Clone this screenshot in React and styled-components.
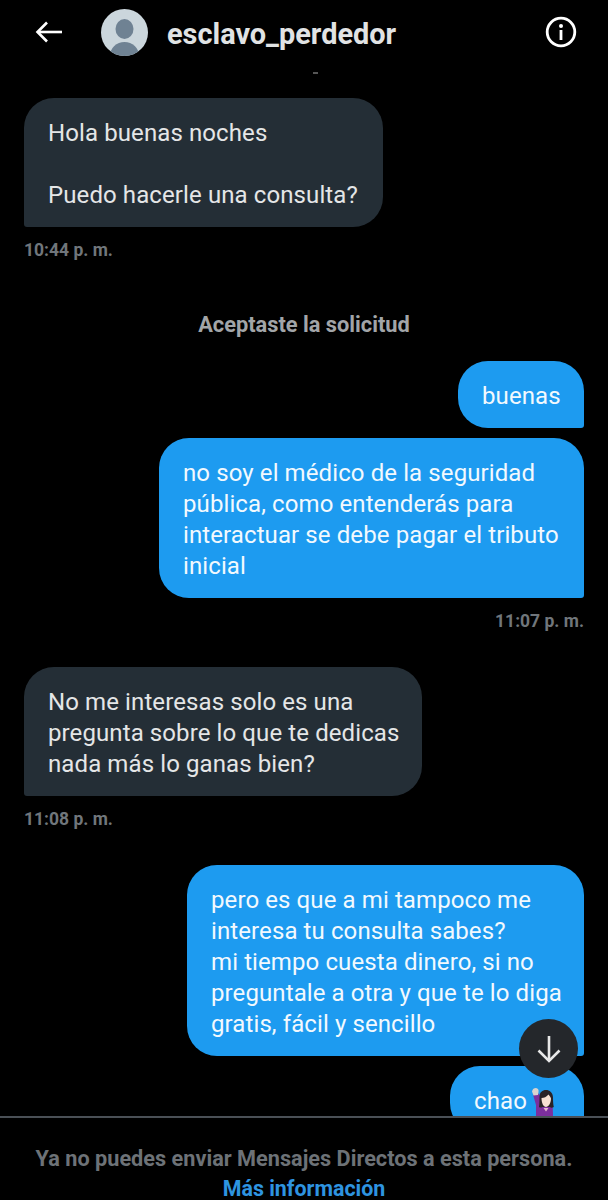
import React from "react";
import styled, { createGlobalStyle } from "styled-components";

const Global = createGlobalStyle`
  html, body { margin: 0; padding: 0; background: #000; }
  * { box-sizing: border-box; }
  svg { flex: none; display: block; }
`;
const Screen = styled.div`
  width: 608px; height: 1200px; background: #000; position: relative; overflow: hidden;
  display: flex; flex-direction: column;
  font-family: Roboto, "Liberation Sans", sans-serif;
`;
const Header = styled.header`
  height: 70px; flex: none; display: flex; align-items: center; padding: 0 33px 6px 34px;
`;
const IconSlot = styled.div`
  width: 28px; height: 28px; display: flex; align-items: center; justify-content: center; flex: none;
`;
const Avatar = styled.div`
  width: 47px; height: 47px; margin-left: 39px; flex: none;
`;
const Name = styled.div`
  flex: 1; margin-left: 19px; margin-top: 4px; color: #e1e3e4; font-size: 28.9px; font-weight: 700;
`;
const ClippedMark = styled.div`
  position: absolute; left: 313px; top: 72px; width: 5px; height: 2px; background: #555;
`;
const Thread = styled.main`
  flex: 1; min-height: 0; overflow: hidden; padding: 28px 24px 0; display: flex; flex-direction: column;
`;
const Bubble = styled.div`
  align-self: ${p => (p.$me ? "flex-end" : "flex-start")};
  width: ${p => p.$w}px;
  flex: none;
  background: ${p => (p.$me ? "#1d9bf0" : "#242e36")};
  color: ${p => (p.$me ? "#f2f9fe" : "#e4e6e7")};
  border-radius: ${p => (p.$me ? "30px 30px 3px 30px" : "30px 30px 30px 3px")};
  padding: 19.5px 20px 16.5px 24px;
  font-size: 24px; line-height: 31px; white-space: pre-line; letter-spacing: .1px;
  margin-top: ${p => p.$mt ?? 0}px;
`;
const Time = styled.div`
  align-self: ${p => (p.$me ? "flex-end" : "flex-start")};
  color: #70767b; font-size: 17.5px; font-weight: 700; line-height: 20px; margin-top: 12.5px;
`;
const Notice = styled.div`
  align-self: center; color: #a2a5a8; font-size: 21.8px; font-weight: 700; line-height: 24px; margin-top: 53.5px;
`;
const LastLine = styled.span`
  display: flex; align-items: center; gap: 4px; height: 31px;
`;
const EmojiSlot = styled.span`
  display: block; align-self: flex-start; margin-top: 2px;
`;
const ScrollButton = styled.button`
  position: absolute; left: 519px; top: 1019px; width: 59px; height: 59px; border: 0; border-radius: 50%;
  background: #24272b; display: flex; align-items: center; justify-content: center; padding: 0;
`;
const Footer = styled.footer`
  height: 84px; flex: none; border-top: 2px solid #4a5056; display: flex; flex-direction: column; align-items: center;
  padding-top: 28px;
`;
const FooterText = styled.div`
  color: #6d7277; font-size: 21.7px; font-weight: 700; line-height: 26px;
`;
const FooterLink = styled.a`
  color: #2e94e0; font-size: 21.4px; font-weight: 700; line-height: 22px; margin-top: 6px;
`;

const Back = () => (
  <svg width="27" height="22" viewBox="0 0 27 22" fill="none" stroke="#fff" strokeWidth="2.6">
    <path d="M27 11H3" />
    <path d="M12 1.500 2.500 11l9.500 9.500" />
  </svg>
);
const Info = () => (
  <svg width="32" height="32" viewBox="0 0 32 32" fill="none">
    <circle cx="16" cy="16" r="13.8" stroke="#fff" strokeWidth="2.8" />
    <circle cx="16" cy="10" r="2" fill="#fff" />
    <rect x="14.600" y="14" width="2.8" height="10" fill="#fff" />
  </svg>
);
const AvatarArt = () => (
  <svg width="47" height="47" viewBox="0 0 47 47">
    <defs><clipPath id="av"><circle cx="23.5" cy="23.5" r="23.5" /></clipPath></defs>
    <circle cx="23.5" cy="23.5" r="23.5" fill="#cbd6dc" />
    <g clipPath="url(#av)" fill="#6f8293">
      <ellipse cx="23.5" cy="20" rx="9" ry="10" />
      <ellipse cx="23.5" cy="47" rx="14.500" ry="14" />
    </g>
  </svg>
);
const Down = () => (
  <svg width="26" height="30" viewBox="0 0 26 30" fill="none" stroke="#e8e8e8" strokeWidth="2.6">
    <path d="M13 2v25" />
    <path d="M2.500 16.500 13 27l10.500-10.500" />
  </svg>
);
const Emoji = () => (
  <svg width="24" height="30" viewBox="0 0 24 30">
    <path d="M2 6.500 8 5.500 11 14h8c2.500 0 3 3 3 16H5V17z" fill="#7c2f9e" />
    <path d="M1 3.500C1.500 1 3 0 5 0c2 .3 3 2 2.500 4L7 7 2.500 7.500z" fill="#d9d3cf" />
    <path d="M8.500 9c0-5 3-7 6.500-7s7 2.500 7 7.500c0 4 .2 7 .8 9.500-1.500 1-3 .8-4 0H11.500c-1.200.8-2.500.8-3.500 0 .5-3 .5-6 .5-9.500z" fill="#2a2326" />
    <path d="M10.500 10c2.500 0 5-1 7-3.500 1 1.500 2.200 2.500 2.500 4 0 4.500-2.500 8.500-5 8.500s-4.500-4-4.500-9z" fill="#f7e0d2" />
    <path d="M12.500 20h5l-2.500 3.500z" fill="#e9b9d0" />
  </svg>
);

export default function App() {
  return (
    <Screen>
      <Global />
      <Header>
        <IconSlot><Back /></IconSlot>
        <Avatar><AvatarArt /></Avatar>
        <Name>esclavo_perdedor</Name>
        <IconSlot><Info /></IconSlot>
      </Header>
      <ClippedMark />
      <Thread>
        <Bubble $w={359}>{"Hola buenas noches\n\nPuedo hacerle una consulta?"}</Bubble>
        <Time>10:44 p. m.</Time>
        <Notice>Aceptaste la solicitud</Notice>
        <Bubble $me $w={126} $mt={24}>buenas</Bubble>
        <Bubble $me $w={425} $mt={10}>{"no soy el médico de la seguridad\npública, como entenderás para\ninteractuar se debe pagar el tributo\ninicial"}</Bubble>
        <Time $me>11:07 p. m.</Time>
        <Bubble $w={398} $mt={36.5}>{"No me interesas solo es una\npregunta sobre lo que te dedicas\nnada más lo ganas bien?"}</Bubble>
        <Time>11:08 p. m.</Time>
        <Bubble $me $w={397} $mt={36.5}>{"pero es que a mi tampoco me\ninteresa tu consulta sabes?\nmi tiempo cuesta dinero, si no\npreguntale a otra y que te lo diga\ngratis, fácil y sencillo"}</Bubble>
        <Bubble $me $w={134} $mt={10}><LastLine>chao <EmojiSlot><Emoji /></EmojiSlot></LastLine></Bubble>
      </Thread>
      <ScrollButton aria-label="Bajar"><Down /></ScrollButton>
      <Footer>
        <FooterText>Ya no puedes enviar Mensajes Directos a esta persona.</FooterText>
        <FooterLink>Más información</FooterLink>
      </Footer>
    </Screen>
  );
}
